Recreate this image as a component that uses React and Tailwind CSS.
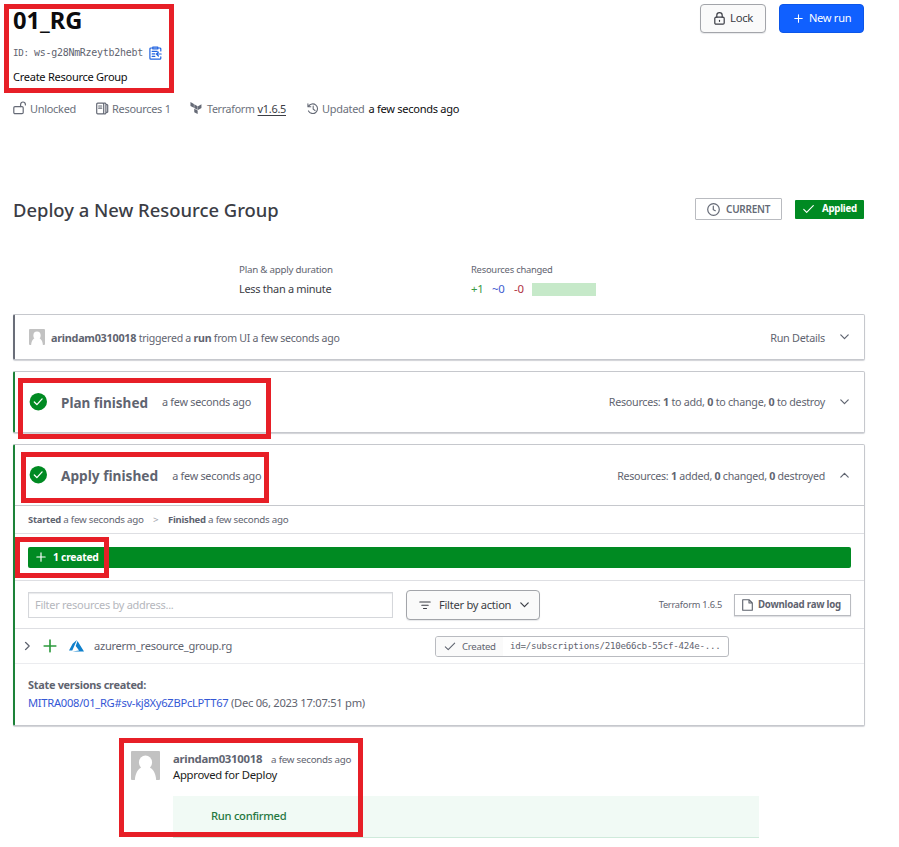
import { clsx } from "clsx";

function UnlockIcon() {
  return (
    <svg className="mb-[2px] h-[14px] w-[14px] shrink-0" viewBox="0 0 14 14" fill="none" stroke="#656a76" strokeWidth="1.2" strokeLinecap="round" strokeLinejoin="round">
      <rect x="0.8" y="5.6" width="9.4" height="7" rx="1.2" />
      <path d="M7.6 5.6V3.4a2.4 2.4 0 0 1 4.8 0v.6" />
    </svg>
  );
}

function ResourcesIcon() {
  return (
    <svg className="mb-[2px] h-[13px] w-[13px] shrink-0" viewBox="0 0 13 13" fill="none" stroke="#656a76" strokeWidth="1.2" strokeLinecap="round" strokeLinejoin="round">
      <rect x="0.7" y="1.2" width="7" height="10.6" rx="1" />
      <path d="M2.7 4h3M2.7 6.2h3M7.7 1.2h1.6l.6.6v9.4l-.6.6H7.7M10 2.6h1.2l.5.5v6.8l-.5.5H10" />
    </svg>
  );
}

function TerraformIcon() {
  return (
    <svg className="mb-[3px] h-[12px] w-[12px] shrink-0" viewBox="0 0 12 13" fill="#656a76">
      <path d="M0 0 3.7 2.1v4.2L0 4.2zM4.1 2.4l3.7 2.1v4.2L4.1 6.6zM8.2 4.5l3.7-2.1v4.2L8.2 8.7zM4.1 7.2 7.8 9.3v3.7L4.1 11.2z" />
    </svg>
  );
}

function HistoryIcon() {
  return (
    <svg className="mb-[2px] h-[12px] w-[12px] shrink-0" viewBox="0 0 13 13" fill="none" stroke="#656a76" strokeWidth="1.2" strokeLinecap="round" strokeLinejoin="round">
      <path d="M1.7 3.6A5.2 5.2 0 1 1 1.6 8.6M1 1v3.1h3.1M6.7 3.4v3.2l2 1.5" />
    </svg>
  );
}

function CopyIcon() {
  return (
    <svg className="h-[14px] w-[13px] shrink-0" viewBox="0 0 13 14" fill="none" stroke="#2264e0" strokeWidth="1.2" strokeLinecap="round" strokeLinejoin="round">
      <path d="M11.8 5V3a1 1 0 0 0-1-1H1.9a1 1 0 0 0-1 1v9.2a1 1 0 0 0 1 1h8.9a1 1 0 0 0 1-1v-1.4" />
      <path d="M3.8 1h5v2h-5zM3.2 5.4h5M3.2 7.9h2.6M3.2 10.4h2.6M12.2 8H7.6M9.4 6.1 7.5 8l1.9 2" />
    </svg>
  );
}

function LockIcon() {
  return (
    <svg className="h-[13px] w-[11px] shrink-0" viewBox="0 0 11 13" fill="none" stroke="#3b3d45" strokeWidth="1.2" strokeLinecap="round" strokeLinejoin="round">
      <rect x="0.8" y="5.2" width="9.4" height="7" rx="1.2" />
      <path d="M2.8 5.2V3.3a2.7 2.7 0 0 1 5.4 0v1.9M5.5 8.3v1" />
    </svg>
  );
}

function PlusIcon({ className }) {
  return (
    <svg className={clsx("shrink-0", className)} viewBox="0 0 12 12" fill="none" stroke="currentColor" strokeWidth="1.4" strokeLinecap="round">
      <path d="M6 1v10M1 6h10" />
    </svg>
  );
}

function CheckIcon({ className }) {
  return (
    <svg className={clsx("shrink-0", className)} viewBox="0 0 12 10" fill="none" stroke="currentColor" strokeWidth="1.2" strokeLinecap="round" strokeLinejoin="round">
      <path d="M.8 5.4 4 8.6 11.2 1.2" />
    </svg>
  );
}

function CheckCircle() {
  return (
    <svg className="mb-px h-[18px] w-[18px] shrink-0" viewBox="0 0 18 18" fill="none">
      <circle cx="9.3" cy="8.7" r="8.7" fill="#008a22" />
      <path d="m5.3 9 2.6 2.6 5.2-5.7" stroke="#fff" strokeWidth="1.3" strokeLinecap="round" strokeLinejoin="round" />
    </svg>
  );
}

function Chevron({ className }) {
  return (
    <svg className={clsx("h-[6px] w-[9px] shrink-0", className)} viewBox="0 0 9 6" fill="none" stroke="currentColor" strokeWidth="1.2" strokeLinecap="round" strokeLinejoin="round">
      <path d="m.8.9 3.7 3.8L8.2.9" />
    </svg>
  );
}

function Avatar({ className }) {
  return (
    <svg className={clsx("shrink-0 rounded-[1px]", className)} viewBox="0 0 30 30">
      <rect width="30" height="30" fill="#c2c2c2" />
      <ellipse cx="15" cy="12" rx="6.8" ry="7.3" fill="#fff" />
      <path d="M4 30c.3-7 3.6-12.5 8-13.2h6c4.4.7 7.7 6.2 8 13.2z" fill="#fff" />
    </svg>
  );
}

function AzureIcon() {
  return (
    <svg className="h-[12px] w-[15px] shrink-0" viewBox="0 0 15 12" fill="#0f80cc">
      <path d="M7.9 0 3.6 3.7 0 10.4h3.3zM8.5 1 6.7 6.1l3.4 4.3L3.5 11.5H15z" />
    </svg>
  );
}

function Highlight({ className }) {
  return <div className={clsx("pointer-events-none absolute border-[5px] border-[#e71f27]", className)} />;
}

const CARD = "rounded-[2px] border border-l-[2px] border-[#c6c8cd] bg-white shadow-[0_1px_1px_rgba(101,106,118,0.3)]";

export default function App() {
  return (
    <div className="relative h-[847px] w-[899px] overflow-hidden whitespace-nowrap bg-white pl-[13px] font-['Noto_Sans','Open_Sans',sans-serif] text-[10.85px] text-[#5f6470] [&_*]:tracking-[-0.025em]">
      <header className="flex h-[94px] w-[851px] justify-between pt-1">
        <div>
          <h1 className="h-[33px] text-[23.7px] leading-[32px] font-bold tracking-normal! text-[#0c0c0e]">01_RG</h1>
          <div className="flex h-8 items-center font-['DejaVu_Sans_Mono','Liberation_Mono',monospace] text-[9.95px]">
            <span className="w-[21px] text-[9.2px]">ID:</span>
            <span className="w-[115px] pt-px">ws-g28NmRzeytb2hebt</span>
            <CopyIcon />
          </div>
          <p className="text-[11.05px] leading-4 text-[#0c0c0e]">Create Resource Group</p>
        </div>
        <div className="flex items-start gap-[13px]">
          <button className="flex h-[29px] w-[66px] items-center rounded-[4px] border border-[#a3a5aa] bg-[#fafafa] pl-[13px] text-[11.3px] text-[#3b3d45] shadow-[0_1px_1px_rgba(101,106,118,0.15)]">
            <LockIcon />
            <span className="ml-[5px]">Lock</span>
          </button>
          <button className="flex h-[29px] w-[85px] items-center rounded-[4px] border border-[#0c56e9] bg-[#1060ff] pl-[14px] text-[11.05px] text-white">
            <PlusIcon className="h-[9px] w-[9px]" />
            <span className="ml-[6px]">New run</span>
          </button>
        </div>
      </header>

      <div className="flex h-[30px] items-center pt-px text-[10.95px] text-[#6b707b]">
        <div className="flex w-[83px] items-center gap-[3px]"><UnlockIcon /><span>Unlocked</span></div>
        <div className="flex w-[94px] items-center gap-[3px]"><ResourcesIcon /><span>Resources 1</span></div>
        <div className="flex w-[117px] items-center">
          <TerraformIcon />
          <span className="ml-[5px] text-[10.6px]">Terraform</span>
          <span className="ml-[3px] text-[10.9px] text-[#3b3d45] underline underline-offset-2">v1.6.5</span>
        </div>
        <div className="flex items-center">
          <HistoryIcon />
          <span className="ml-[3px]">Updated</span>
          <span className="ml-[4px] text-[11.05px] text-[#0c0c0e]">a few seconds ago</span>
        </div>
      </div>

      <div className="mt-[72px] flex h-[26px] w-[851px] items-center">
        <h2 className="flex-1 pt-px text-[18.4px] font-medium tracking-normal! text-[#3b3d45]">Deploy a New Resource Group</h2>
        <div className="flex h-[22px] w-[87px] items-center rounded-[1px] border border-[#b9bbc0] pl-[11px] text-[10px] font-semibold text-[#656a76]">
          <svg className="h-[13px] w-[13px]" viewBox="0 0 13 13" fill="none" stroke="#656a76" strokeWidth="1.2" strokeLinecap="round"><circle cx="6.5" cy="6.5" r="5.8" /><path d="M6.3 3.2v3.5l2 1" /></svg>
          <span className="ml-[6px]">CURRENT</span>
        </div>
        <div className="ml-[13px] flex h-[19px] w-[69px] items-center rounded-[1px] bg-[#008a22] pl-2 text-[9.7px] font-bold text-white">
          <CheckIcon className="h-[10px] w-[11px]" />
          <span className="ml-[8px] pt-px">Applied</span>
        </div>
      </div>

      <div className="mt-[38px] flex h-[54px] pl-[226px]">
        <div className="w-[232px]">
          <p className="text-[9.75px] leading-5">Plan &amp; apply duration</p>
          <p className="text-[10.95px] leading-[18px] text-[#3b3d45]">Less than a minute</p>
        </div>
        <div>
          <p className="text-[9.4px] leading-5">Resources changed</p>
          <div className="flex items-center text-[10.9px] leading-[18px]">
            <span className="w-[21px] text-[11.4px] text-[#3a9a45]">+1</span>
            <span className="w-[22px] text-[11.4px] text-[#3e5bd0]">~0</span>
            <span className="w-[18px] text-[11.4px] text-[#b0303f]">-0</span>
            <span className="mt-px h-[13px] w-16 bg-[#c6e9c9]" />
          </div>
        </div>
      </div>

      <main className="flex w-[852px] flex-col gap-[11px]">
        <section className={clsx(CARD, "flex h-[46px] items-center border-l-[#6a6e79]! pl-[14px] pr-[15px]")}>
          <Avatar className="h-4 w-4" />
          <p className="ml-[6px] flex-1 pt-[2px] text-[10.6px]"><b className="text-[10.85px]">arindam0310018</b> triggered a <b>run</b> from UI a few seconds ago</p>
          <span className="pt-[2px]">Run Details</span>
          <Chevron className="ml-[15px]" />
        </section>

        <section className={clsx(CARD, "flex h-[62px] items-center border-l-[#1c8238]! pl-[14px] pr-[15px]")}>
          <CheckCircle />
          <h3 className="ml-[14px] pt-[2px] text-[13.5px] font-bold tracking-normal!">Plan finished</h3>
          <span className="ml-[14px] flex-1 pt-px">a few seconds ago</span>
          <span className="pt-px text-[10.72px]">Resources: <b>1</b> to add, <b>0</b> to change, <b>0</b> to destroy</span>
          <Chevron className="ml-[15px]" />
        </section>

        <section className={clsx(CARD, "h-[282px] border-l-[#1c8238]!")}>
          <div className="flex h-[61px] items-center border-b border-[#c6c8cd] pl-[14px] pr-[15px]">
            <CheckCircle />
            <h3 className="ml-[14px] pt-[2px] text-[13.7px] font-bold tracking-normal!">Apply finished</h3>
            <span className="ml-[14px] flex-1 pt-[3px]">a few seconds ago</span>
            <span className="pt-[3px] text-[10.64px]">Resources: <b>1</b> added, <b>0</b> changed, <b>0</b> destroyed</span>
            <Chevron className="ml-[15px] rotate-180" />
          </div>
          <div className="flex h-[28px] items-center border-b border-[#dedfe3] pt-px pl-[13px] text-[9.8px]">
            <span className="w-[125px]"><b className="text-[9.4px]">Started</b> a few seconds ago</span>
            <span className="w-[15px] text-[#a0a3ab]">&gt;</span>
            <span><b className="text-[9.5px]">Finished</b> a few seconds ago</span>
          </div>
          <div className="flex h-[47px] items-center border-b border-[#dedfe3] pl-[13px] pr-[13px]">
            <div className="flex h-[21px] flex-1 items-center rounded-[2px] bg-[#008a22] pl-2 text-[10.35px] font-bold text-white">
              <PlusIcon className="h-[10px] w-[10px]" />
              <span className="ml-[7px] pt-px">1 created</span>
            </div>
          </div>
          <div className="flex h-[48px] items-center border-b border-[#dedfe3] pl-[13px] pr-[13px]">
            <div className="flex h-[26px] w-[365px] items-center border border-[#d5d7db] pl-[6px] pt-px text-[11px] text-[#b5b7bd] shadow-[inset_0_1px_1px_rgba(101,106,118,0.15)]">Filter resources by address...</div>
            <button className="ml-[13px] flex h-[30px] w-[134px] items-center rounded-[4px] border border-[#a3a5aa] bg-[#fafafa] pl-[12px] text-[11.15px] text-[#3b3d45] shadow-[0_1px_1px_rgba(101,106,118,0.15)]">
              <svg className="mt-px h-[9px] w-[12px]" viewBox="0 0 12 9" stroke="#3b3d45" strokeWidth="1.1" strokeLinecap="round"><path d="M.8 1h10.4M2.8 4.2h6.4M4.5 7.5h3" /></svg>
              <span className="ml-[8px] pt-px">Filter by action</span>
              <Chevron className="ml-[9px]" />
            </button>
            <span className="ml-auto text-[9.25px]">Terraform 1.6.5</span>
            <button className="ml-3 flex h-[22px] w-[117px] items-center border border-[#b9bbc0] pl-[7px] text-[9.7px] font-bold shadow-[0_1px_1px_rgba(101,106,118,0.2)]">
              <svg className="h-[12px] w-[11px]" viewBox="0 0 11 12" fill="none" stroke="#5c616c" strokeWidth="1.1" strokeLinejoin="round"><path d="M.7.7h6.3l3.3 3.3v7.3H.7zM7 .7v3.3h3.3" /></svg>
              <span className="ml-[5px] pt-px">Download raw log</span>
            </button>
          </div>
          <div className="flex h-[35px] items-center border-b border-[#ebecef]">
            <Chevron className="ml-[8px] -rotate-90" />
            <PlusIcon className="ml-[11px] h-[14px] w-[14px] text-[#2c9a3c]" />
            <span className="ml-[12px]"><AzureIcon /></span>
            <span className="ml-[10px] w-[341px] pt-px text-[11.1px]">azurerm_resource_group.rg</span>
            <div className="flex h-[21px] w-[294px] items-center overflow-hidden rounded-[3px] border border-[#b9bbc0]">
              <div className="flex h-full w-[67px] items-center bg-[#fafafa] pl-2 text-[9.6px]">
                <CheckIcon className="h-[9px] w-[12px]" />
                <span className="ml-[6px] pt-[2px]">Created</span>
              </div>
              <span className="ml-[7px] pt-[2px] font-['DejaVu_Sans_Mono','Liberation_Mono',monospace] text-[9.15px]">id=/subscriptions/210e66cb-55cf-424e-...</span>
            </div>
          </div>
          <div className="pt-3 pl-[13px] text-[11.18px] leading-[18px]">
            <p className="text-[10.9px] font-bold">State versions created:</p>
            <p><span className="text-[#3457d5]">MITRA008/01_RG#sv-kj8Xy6ZBPcLPTT67</span> (Dec 06, 2023 17:07:51 pm)</p>
          </div>
        </section>
      </main>

      <div className="mt-[25px] flex pl-[118px]">
        <Avatar className="h-[29px] w-[29px]" />
        <div className="ml-[13px] w-[586px]">
          <p className="flex h-4 items-center text-[11.35px]"><b className="-mt-px">arindam0310018</b><span className="ml-[9px] pt-[2px] text-[9.75px]">a few seconds ago</span></p>
          <p className="text-[11.3px] leading-4 text-[#1c1d21]">Approved for Deploy</p>
          <div className="mt-[13px] flex h-[42px] items-center border-b border-[#cfeadb] bg-[#f1faf5] pl-[38px] text-[11.2px] font-medium text-[#26773f]">Run confirmed</div>
        </div>
      </div>

      <Highlight className="top-[4px] left-[4px] h-[89px] w-[170px]" />
      <Highlight className="top-[378px] left-[18px] h-[61px] w-[253px]" />
      <Highlight className="top-[452px] left-[21px] h-[51px] w-[248px]" />
      <Highlight className="top-[537px] left-[15px] h-[41px] w-[94px]" />
      <Highlight className="top-[738px] left-[119px] h-[99px] w-[244px]" />
    </div>
  );
}
